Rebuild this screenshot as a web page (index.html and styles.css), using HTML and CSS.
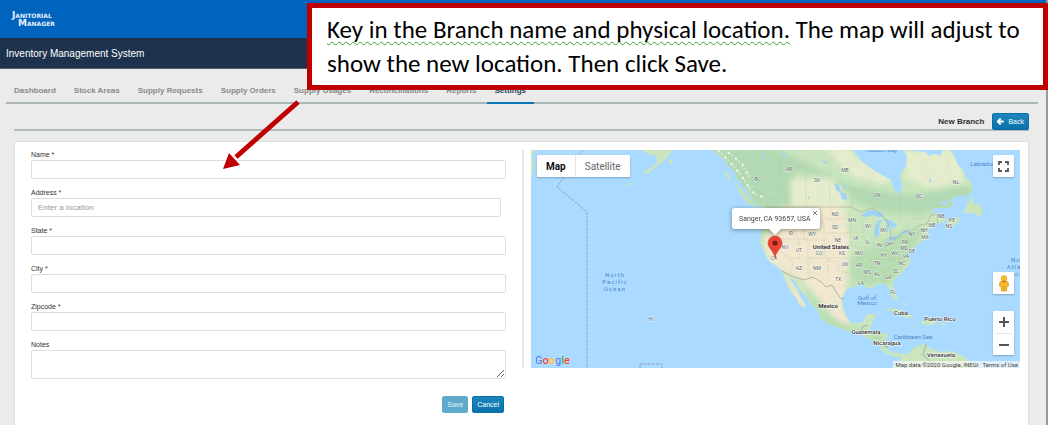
FILE: index.html
```html
<!DOCTYPE html>
<html lang="en">
<head>
<meta charset="utf-8">
<title>Inventory Management System</title>
<link rel="stylesheet" href="styles.css">
</head>
<body>
<div class="page">
  <header class="brandbar">
    <div class="logo"><span>Janitorial</span><span class="logo-second">Manager</span></div>
  </header>
  <div class="titlebar"><h1>Inventory Management System</h1></div>

  <nav class="tabs">
    <a href="#">Dashboard</a>
    <a href="#">Stock Areas</a>
    <a href="#">Supply Requests</a>
    <a href="#">Supply Orders</a>
    <a href="#">Supply Usages</a>
    <a href="#">Reconciliations</a>
    <a href="#">Reports</a>
    <a href="#" class="active">Settings</a>
  </nav>

  <div class="subhead">
    <h2>New Branch</h2>
    <button type="button" class="btn back">
      <svg viewBox="0 0 8 8" width="7" height="7" aria-hidden="true"><path d="M4.2 .6 L.8 4 L4.2 7.4 M1.2 4 H7.6" fill="none" stroke="#fff" stroke-width="2.2"/></svg>
      <span>Back</span>
    </button>
  </div>

  <main class="panel">
    <form class="form">
      <label for="name">Name *</label>
      <input id="name" type="text">
      <label for="address">Address *</label>
      <input id="address" class="short" type="text" placeholder="Enter a location">
      <label for="state">State *</label>
      <input id="state" type="text">
      <label for="city">City *</label>
      <input id="city" type="text">
      <label for="zip">Zipcode *</label>
      <input id="zip" type="text">
      <label for="notes">Notes</label>
      <textarea id="notes"></textarea>
      <div class="actions">
        <button type="button" class="btn muted">Save</button>
        <button type="button" class="btn">Cancel</button>
      </div>
    </form>

    <section class="mapcol">
      <div class="map">
        <svg class="mapart" viewBox="530 150 491 218" preserveAspectRatio="xMidYMid slice" role="img" aria-label="Map of North America">
          <defs>
            <clipPath id="land">
              <path id="coast" d="M713 150 L719 156 L724 159 L728 166 L734 171 L736 177 L742 184 L749 194 L754 202 L762 208 L766 213 L763 218 L762 230 L760 242 L763 250 L766 256 L770 262 L777 266 L782 271 L785 280 L790 291 L797 299 L799 304 L805 308 L806 305 L801 298 L797 289 L791 281 L790 277 L795 281 L800 290 L808 299 L813 306 L818 311 L820 318 L830 325 L840 328 L847 331 L854 331 L860 334 L867 338 L875 341 L880 345 L881 350 L887 354 L893 356 L897 358 L901 355 L900 360 L896 364 L894 368 L976 368 L970 361 L961 355 L951 351 L942 352 L934 350 L926 346 L925 343 L919 346 L912 349 L908 355 L902 353 L893 353 L888 350 L885 344 L888 334 L878 332 L868 331 L871 326 L873 322 L876 314 L867 314 L863 322 L853 324 L847 318 L843 308 L842 299 L846 290 L853 287 L863 284 L867 288 L872 288 L878 284 L885 284 L889 288 L892 296 L896 301 L898 298 L893 287 L894 280 L902 273 L905 269 L911 262 L908 254 L911 249 L915 247 L922 241 L927 239 L930 235 L927 231 L933 226 L942 222 L950 220 L946 223 L947 230 L959 222 L960 217 L949 220 L940 217 L937 213 L929 211 L936 208 L949 208 L954 204 L945 204 L956 196 L966 196 L973 191 L972 184 L966 177 L962 169 L958 165 L954 156 L950 150 L943 150 L941 156 L934 154 L929 156 L925 152 L903 150 L907 157 L906 166 L901 173 L900 179 L903 187 L898 194 L894 190 L891 180 L880 174 L869 167 L860 160 L853 150 Z M968 203 L972 195 L973 203 L980 205 L983 211 L981 217 L973 213 L963 213 Z M642 150 H672 L667 158 L658 165 L648 173 L641 174 L650 168 L657 163 L656 156 L648 154 Z M530 150 H535 L532 157 L534 166 L531 178 L530 179 Z M884 311 L892 308 L901 310 L907 313 L914 317 L906 318 L901 314 L892 311 Z M920 323 L925 319 L932 320 L937 324 L928 325 L924 324 Z M938 203 L948 200 L954 202 L946 205 Z M941 323 H946 V325 H941 Z M668 162 L673 157 L672 165 Z M724 170 L729 174 L731 182 L727 178 Z M735 182 L744 192 L753 202 L757 208 L747 203 L740 194 Z M633 183 L629 186 L626 186 L630 183 Z M624 187 L622 188 L622 186 Z M662 319 L665 319 L664 321 Z M903 302 L906 305 L904 305 Z M912 325 L918 326 L914 327 Z"/>
            </clipPath>
            <filter id="soft" x="-20%" y="-20%" width="140%" height="140%"><feGaussianBlur stdDeviation="2.5"/></filter>
            <filter id="mottle" x="0" y="0" width="100%" height="100%">
              <feTurbulence type="fractalNoise" baseFrequency=".13" numOctaves="3" seed="8"/>
              <feColorMatrix values="0 0 0 0 .55  0 0 0 0 .78  0 0 0 0 .56  4 0 0 0 -2"/>
            </filter>
          </defs>
          <rect x="0" y="0" width="1600" height="600" fill="#aadaff"/>
          <g clip-path="url(#land)">
            <rect x="530" y="150" width="491" height="218" fill="#cbe6bc"/>
            <rect x="530" y="150" width="491" height="218" filter="url(#mottle)" opacity=".45"/>
            <g filter="url(#soft)">
              <path fill="#b3d9b3" d="M710 145 L770 145 L850 185 L905 195 L975 185 L965 205 L920 215 L880 212 L855 202 L835 178 L795 172 L790 205 L755 208 Z"/>
              <path fill="#e5edcd" d="M790 180 L832 178 L848 205 L830 210 L792 205 Z M845 148 L900 180 L880 184 L850 175 L825 148 Z M905 150 L955 150 L965 182 L930 188 L905 178 Z"/>
              <path fill="#f3e8cf" d="M763 232 L783 208 L845 208 L849 240 L846 285 L842 310 L826 306 L800 278 L768 264 Z"/>
              <path fill="#f3e8cf" d="M784 272 L790 275 L808 308 L800 308 Z M825 300 L842 308 L850 324 L835 322 Z"/>
              <path fill="#b6dcb0" d="M850 258 L905 230 L925 228 L905 265 L890 284 L855 284 Z M765 208 L782 208 L772 232 L758 240 Z"/>
              <path fill="#b6dcb0" d="M804 285 L824 312 L848 326 L880 332 L888 350 L868 336 L828 325 L812 305 Z"/>
            </g>
            <rect x="530" y="150" width="491" height="218" filter="url(#mottle)" opacity=".2"/>
            <path fill="none" stroke="#eef2ea" stroke-width="2" stroke-dasharray="3 2 1 3" d="M718 150 L730 162 L741 175 L752 192 L764 198 M728 152 L742 164 L750 178"/>
          </g>
          <g fill="#9fd2f7">
            <path d="M834 183 L839 185 L841 192 L846 194 L847 200 L842 199 L840 192 L836 190 Z M842 183 L846 187 L844 190 Z"/>
            <path d="M861 216 L867 211 L873 210 L882 213 L885 217 L878 217 L872 215 L867 217 Z"/>
            <path d="M875 226 L878 221 L882 220 L879 226 L879 235 L876 238 L874 233 Z"/>
            <path d="M883 219 L890 220 L897 225 L893 229 L889 224 L888 233 L885 230 L887 223 Z"/>
            <path d="M887 240 L893 236 L900 235 L895 239 L889 242 Z M900 233 L907 229 L909 231 L904 234 Z"/>
            <path d="M762 150 L765 158 L762 156 Z M782 152 L787 156 L783 157 Z M822 159 L829 164 L824 163 Z M808 196 L810 198 L808 199 Z M930 178 L932 183 L929 181 Z"/>
          </g>
          <g fill="none" stroke="#a5a19b" stroke-width=".8">
            <path d="M766 207 H851 L861 212 L873 208 L887 220 L891 232 L890 239 L898 238 L903 232 L912 231 L920 225 L927 224 L931 215 L937 215 L938 226" stroke-opacity=".7"/>
            <path d="M782 271 L791 276 L804 280 L813 277 L821 282 L826 287 L832 285 L840 298 L844 299 M861 332 L863 326 L868 325 M867 333 L873 331 L880 335 M884 346 L888 347"/>
            <path d="M926 344 L923 355 L930 361 L935 368"/>
          </g>
          <g fill="none" stroke="#b9b7ab" stroke-width=".4" stroke-dasharray="2 1">
            <path d="M780 160 V185 L787 207 M806 150 V207 M830 150 V207 M852 208 V198 L875 176 M900 195 V220 L927 218 L940 210 M765 222 H790 M773 239 H808 M780 239 V250 L793 263 L790 274 M790 208 V224 L799 239 V258 H790 M808 239 V279 M824 222 V258 M804 222 H824 M796 212 L804 222 V240 H826 M824 219 H848 M825 233 H850 M808 258 H850 M826 246 H852 M828 258 V277 M828 261 H838 V271 L853 274 M850 214 L851 246 M852 258 V284 M850 232 H863 M852 247 H865 M862 222 L866 250 L870 262 M865 270 V283 M872 267 V284 M882 267 L884 283 M870 259 H902 M874 236 V250 M885 240 V251 M895 238 L890 252 M897 240 H912"/>
          </g>
          <path d="M583 150 L557 187 L587 212 V368 M640 368 V364 H662 V368" fill="none" stroke="#8f8fb5" stroke-width=".8" stroke-dasharray="3 1"/>

          <g class="state">
            <text x="758" y="181">BC</text><text x="789" y="171">AB</text><text x="845" y="172">MB</text><text x="817" y="182">SK</text><text x="877" y="197">ON</text><text x="919" y="198">QC</text><text x="956" y="184">NL</text><text x="941" y="218">NB</text><text x="952" y="222">PE</text><text x="949" y="228">NS</text><text x="932" y="227">ME</text><text x="924" y="232">NH</text><text x="912" y="236">NY</text><text x="925" y="239">MA</text><text x="905" y="244">PA</text><text x="904" y="250">MD</text><text x="912" y="253">DE</text><text x="895" y="255">WV</text><text x="906" y="258">VA</text><text x="902" y="265">NC</text><text x="896" y="273">SC</text><text x="835" y="216">ND</text><text x="835" y="229">SD</text><text x="852" y="222">MN</text><text x="868" y="228">WI</text><text x="883" y="232">MI</text><text x="856" y="240">IA</text><text x="868" y="244">IL</text><text x="879" y="247">IN</text><text x="889" y="246">OH</text><text x="838" y="242">NE</text><text x="812" y="236">WY</text><text x="791" y="235">ID</text><text x="785" y="249">NV</text><text x="799" y="252">UT</text><text x="819" y="255">CO</text><text x="842" y="255">KS</text><text x="859" y="255">MO</text><text x="884" y="257">KY</text><text x="774" y="260">CA</text><text x="799" y="270">AZ</text><text x="817" y="270">NM</text><text x="845" y="266">OK</text><text x="859" y="267">AR</text><text x="877" y="265">TN</text><text x="867" y="274">MS</text><text x="877" y="276">AL</text><text x="888" y="279">GA</text><text x="838" y="281">TX</text><text x="861" y="285">LA</text><text x="893" y="294">FL</text><text x="651" y="321">HI</text>
          </g>
          <g class="country">
            <text x="831" y="249">United States</text><text x="828" y="308">Mexico</text>
            <text class="small" x="866" y="334">Guatemala</text><text class="small" x="887" y="345">Nicaragua</text><text class="small" x="901" y="315">Cuba</text><text class="small" x="940" y="321">Puerto Rico</text><text class="small" x="941" y="357">Venezuela</text>
          </g>
          <g class="sea">
            <text x="867" y="300">Gulf of</text><text x="867" y="305">Mexico</text><text x="913" y="339">Caribbean Sea</text><text x="988" y="166">Labrador Sea</text><text x="881" y="152">Hudson Bay</text>
            <g class="ocean"><text x="615" y="277">North</text><text x="615" y="284">Pacific</text><text x="615" y="291">Ocean</text><text x="1021" y="262">North</text><text x="1021" y="269">Atlantic</text><text x="1021" y="276">Ocean</text></g>
          </g>

          <g class="bubble">
            <path d="M735 208 H817 Q820 208 820 211 V226 Q820 229 817 229 H781 L775 235 L769 229 H735 Q732 229 732 226 V211 Q732 208 735 208 Z" fill="#fff"/>
            <text x="739" y="221">Sanger, CA 93657, USA</text>
            <path d="M813 211 L817 215 M817 211 L813 215" stroke="#555" stroke-width=".8"/>
          </g>
          <path d="M775 258 C774 251 768 248 768 243 A7 7 0 0 1 782 243 C782 248 776 251 775 258 Z" fill="#ea4335" stroke="#c5322a" stroke-width=".5"/>
          <circle cx="775" cy="243" r="2.6" fill="#7d1a13"/>
        </svg>

        <div class="maptype"><button type="button" class="on">Map</button><button type="button">Satellite</button></div>
        <button type="button" class="ctl full" aria-label="Fullscreen">
          <svg viewBox="0 0 11 11" width="11" height="11"><path d="M1 4 V1 H4 M7 1 H10 V4 M10 7 V10 H7 M4 10 H1 V7" fill="none" stroke="#555" stroke-width="1.8"/></svg>
        </button>
        <button type="button" class="ctl peg" aria-label="Street View">
          <svg viewBox="0 0 10 17" width="10" height="17"><path d="M2.2 6 H7.8 Q9.6 6.3 9.6 11 H8 L7.4 16 H2.6 L2 11 H.4 Q.4 6.3 2.2 6Z" fill="#fbb829" stroke="#c88c20" stroke-width=".6"/><circle cx="5" cy="3.4" r="2.8" fill="#fbb829" stroke="#d79724" stroke-width=".6"/><path d="M3 6 L5 8 L7 6Z" fill="#e0622c"/><path d="M5 11 V16" stroke="#c88c20" stroke-width=".7"/></svg>
        </button>
        <div class="zoom">
          <button type="button" aria-label="Zoom in"><svg viewBox="0 0 10 10" width="10" height="10"><path d="M0 5 H10 M5 0 V10" stroke="#555" stroke-width="2"/></svg></button>
          <button type="button" aria-label="Zoom out"><svg viewBox="0 0 10 10" width="10" height="10"><path d="M0 5 H10" stroke="#555" stroke-width="2"/></svg></button>
        </div>
        <div class="google"><span class="g-b">G</span><span class="g-r">o</span><span class="g-y">o</span><span class="g-b">g</span><span class="g-g">l</span><span class="g-r">e</span></div>
        <div class="credits"><span>Map data ©2020 Google, INEGI</span><a href="#">Terms of Use</a></div>
      </div>
    </section>
  </main>

  <svg class="arrow" viewBox="0 0 80 72" width="80" height="72" aria-hidden="true"><path d="M78 3 L16 58" stroke="#c00000" stroke-width="5"/><path d="M3 70 L9 54 L20 66 Z" fill="#c00000"/></svg>
  <aside class="callout"><span class="checked">Key in the Branch name and physical location.</span> The map will adjust to show the new location. Then click Save.</aside>
</div>
</body>
</html>
```
FILE: styles.css
```css
* { box-sizing: border-box; }

body {
  margin: 0;
  font-family: "Liberation Sans", Arial, sans-serif;
  font-size: 8px;
  color: #333;
  background: #ebebeb;
}

button, input, textarea { font: inherit; }
a { text-decoration: none; color: inherit; }

.page {
  position: relative;
  min-height: 100vh;
  display: flex;
  flex-direction: column;
  border-right: 2px solid #999;
}

.brandbar {
  height: 38px;
  padding: 11px 12px;
  background: #0063be;
}

.logo {
  display: flex;
  flex-direction: column;
  font-family: "DejaVu Sans", sans-serif;
  font-size: 9px;
  font-variant: small-caps;
  font-weight: bold;
  line-height: 8px;
  color: #e4effb;
}
.logo-second { padding-left: 6px; }

.titlebar {
  height: 31px;
  padding: 0 6px;
  display: flex;
  align-items: center;
  background: #1e324d;
  border-bottom: 1px solid #52616f;
}
.titlebar h1 {
  margin: 0;
  font-size: 10px;
  font-weight: normal;
  color: #fff;
}

.tabs {
  display: flex;
  gap: 2px;
  margin: 10px 8px 0 6px;
  height: 25px;
  border-bottom: 2px solid #aab6b8;
}
.tabs a {
  height: 25px;
  padding: 0 8px;
  line-height: 23px;
  font-weight: bold;
  color: #8a8a8a;
}
.tabs .active {
  color: #2c4a52;
  border-bottom: 2px solid #0b76b8;
}

.subhead {
  display: flex;
  justify-content: flex-end;
  align-items: flex-start;
  gap: 8px;
  margin: 9px 17px 0 14px;
  height: 18px;
  border-bottom: 2px solid #b1bbbd;
}
.subhead h2 {
  margin: 0;
  font-size: 8px;
  line-height: 18px;
  color: #2e3033;
}

.btn {
  height: 17px;
  padding: 0 4px;
  border: 1px solid #0a6fa6;
  border-radius: 2px;
  background: linear-gradient(#1b86bd, #0b72a9);
  color: #fff;
  font-size: 7px;
  line-height: 15px;
}
.muted {
  background: #5fa9cd;
  border-color: #5fa9cd;
  color: #e2f0f7;
}
.back {
  display: flex;
  align-items: center;
  gap: 4px;
}

.panel {
  flex: 1;
  display: grid;
  grid-template-columns: minmax(0, 475fr) minmax(0, 498fr);
  align-items: start;
  gap: 16px;
  margin: 10px 17px 0 14px;
  padding: 8px 8px 12px 16px;
  background: #fff;
  border: 1px solid #dedede;
  border-bottom: 0;
}

.form {
  display: flex;
  flex-direction: column;
}
.form label {
  font-size: 7px;
  line-height: 10px;
}
.form input, .form textarea {
  width: 100%;
  height: 19px;
  margin: 0 0 9px;
  padding: 0 6px;
  border: 1px solid #ddd;
  border-radius: 2px;
  background: #fff;
}
.form .short { width: 99%; }
.form textarea {
  height: 29px;
  margin-bottom: 17px;
  resize: vertical;
}
.form ::placeholder { color: #999; }
.actions {
  display: flex;
  justify-content: flex-end;
  gap: 4px;
  padding-right: 2px;
}

.mapcol {
  padding-left: 7px;
  border-left: 2px solid #e6e6e6;
}
.map {
  position: relative;
  height: 218px;
  overflow: hidden;
  font-family: Roboto, sans-serif;
}
.mapart {
  display: block;
  width: 100%;
  height: 100%;
}
.mapart text { font-family: Roboto, sans-serif; }
.state text {
  font-size: 5px;
  text-anchor: middle;
  fill: #56635f;
  stroke: rgba(255, 255, 255, .7);
  stroke-width: 1px;
  paint-order: stroke;
}
.country text {
  font-size: 6px;
  font-weight: bold;
  text-anchor: middle;
  fill: #333;
  stroke: #fff;
  stroke-width: 1px;
  paint-order: stroke;
}
.country .small { font-weight: 500; }
.sea text {
  font-size: 6px;
  text-anchor: middle;
  fill: #4f86cb;
}
.ocean text { letter-spacing: 1px; }
.bubble { filter: drop-shadow(0 1px 2px rgba(0, 0, 0, .4)); }
.bubble text { font-size: 7px; fill: #444; }

.maptype, .ctl, .zoom {
  position: absolute;
  background: #fff;
  border: 0;
  border-radius: 1px;
  box-shadow: 0 1px 2px rgba(0, 0, 0, .25);
}
.maptype {
  left: 6px;
  top: 5px;
  height: 22px;
  display: flex;
}
.maptype button {
  padding: 0 9px;
  border: 0;
  background: none;
  font-size: 10px;
  color: #666;
}
.maptype .on {
  border-right: 1px solid #e6e6e6;
  font-weight: bold;
  color: #111;
}
.ctl {
  right: 6px;
  width: 21px;
  height: 22px;
  padding: 0;
  display: grid;
  place-items: center;
}
.full { top: 5px; }
.peg { top: 122px; }
.zoom {
  right: 6px;
  top: 161px;
  width: 21px;
  display: flex;
  flex-direction: column;
  padding: 0 2px;
}
.zoom button {
  height: 22px;
  padding: 0;
  border: 0;
  background: none;
  display: grid;
  place-items: center;
}
.zoom button + button { border-top: 1px solid #e6e6e6; }
.google {
  position: absolute;
  left: 4px;
  bottom: 1px;
  font-size: 11px;
  font-weight: 500;
  line-height: 13px;
  text-shadow: 0 0 1px #fff;
}
.g-b { color: #4285f4; }
.g-r { color: #ea4335; }
.g-y { color: #fbbc05; }
.g-g { color: #34a853; }
.credits {
  position: absolute;
  right: 0;
  bottom: 0;
  display: flex;
  gap: 4px;
  padding: 0 2px;
  background: rgba(245, 245, 245, .75);
  font-size: 6px;
  line-height: 7px;
  color: #444;
}

.arrow {
  position: absolute;
  left: 220px;
  top: 99px;
}
.callout {
  position: absolute;
  left: 307px;
  right: -2px;
  top: 3px;
  padding: 5px 15px 4px;
  border: 5px solid #c00000;
  background: #fff;
  font-family: Carlito, Lato, sans-serif;
  font-size: 25px;
  line-height: 34px;
  color: #000;
}
.checked {
  text-decoration: underline wavy #3a9d3a 1px;
  text-underline-offset: 3px;
  text-decoration-skip-ink: none;
}
```
